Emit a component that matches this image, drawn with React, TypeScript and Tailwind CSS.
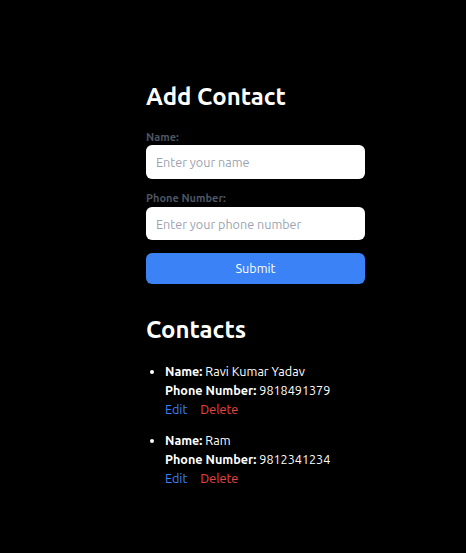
const contacts = [
  { name: "Ravi Kumar Yadav", phone: "9818491379" },
  { name: "Ram", phone: "9812341234" },
];

export default function App() {
  return (
    <div
      className="min-h-[553px] w-full bg-black text-white"
      style={{ fontFamily: "Ubuntu, 'Noto Sans', 'Open Sans', sans-serif" }}
    >
      <div className="ml-[146px] w-[219px] pt-[83px]">
        <h1 className="text-[24px] font-bold leading-[28px]">Add Contact</h1>

        <form className="mt-[19px]" onSubmit={(e) => e.preventDefault()}>
          <label className="block text-[11px] font-bold leading-[14px] text-[#4b5563]">
            Name:
          </label>
          <input
            type="text"
            placeholder="Enter your name"
            className="mt-[1px] block h-[34px] w-full rounded-md bg-white px-[10px] text-[12.6px] text-black placeholder:text-[#9ca3af] outline-none"
          />

          <label className="mt-[12px] block text-[11px] font-bold leading-[14px] text-[#4b5563]">
            Phone Number:
          </label>
          <input
            type="text"
            placeholder="Enter your phone number"
            className="mt-[2px] block h-[33px] w-full rounded-md bg-white px-[10px] text-[12.6px] text-black placeholder:text-[#9ca3af] outline-none"
          />

          <button
            type="submit"
            className="mt-[13px] block h-[31px] w-full rounded-md bg-[#3b82f6] text-[12.6px] text-white"
          >
            Submit
          </button>
        </form>

        <h2 className="mt-[32px] text-[24px] font-bold leading-[28px]">Contacts</h2>

        <ul className="mt-[18px] list-disc pl-[19px] text-[12.6px] leading-[19px]">
          {contacts.map((c) => (
            <li key={c.phone} className="mb-[12px]">
              <div>
                <span className="font-bold">Name:</span> {c.name}
              </div>
              <div>
                <span className="font-bold">Phone Number:</span> {c.phone}
              </div>
              <div className="flex gap-[13px]">
                <button className="text-[#3b82f6]">Edit</button>
                <button className="text-[#ef4444]">Delete</button>
              </div>
            </li>
          ))}
        </ul>
      </div>
    </div>
  );
}
